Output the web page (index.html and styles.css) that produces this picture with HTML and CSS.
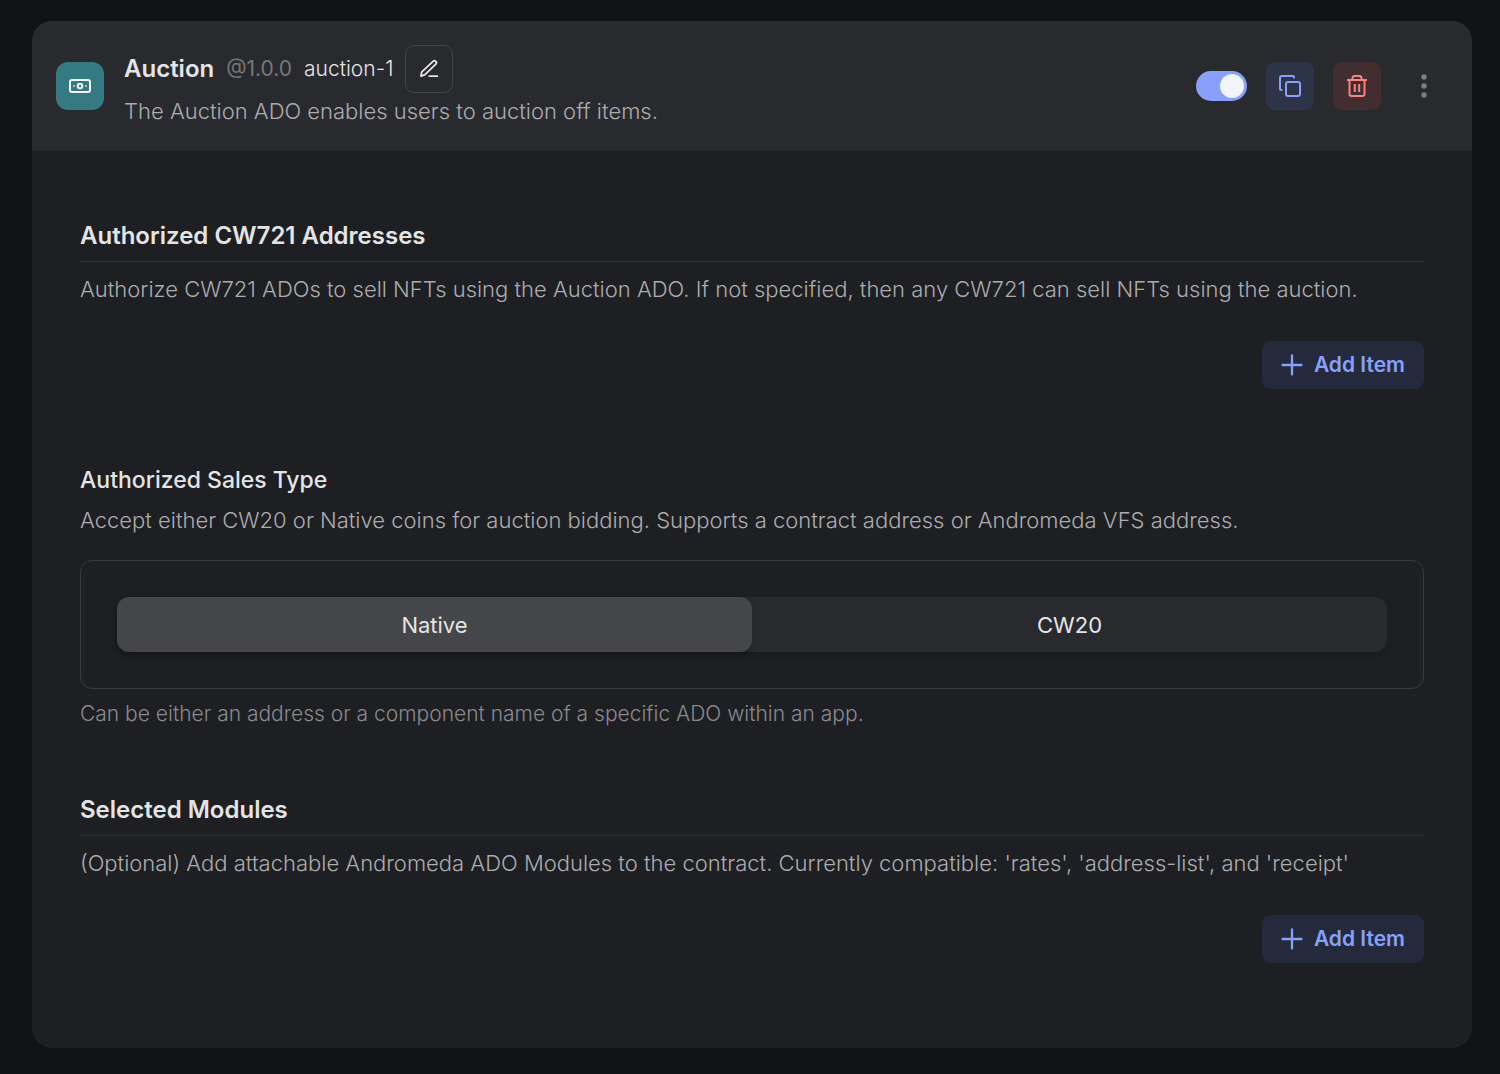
FILE: index.html
```html
<!DOCTYPE html>
<html lang="en">
<head>
<meta charset="utf-8">
<meta name="viewport" content="width=device-width, initial-scale=1">
<title>Auction</title>
<link rel="stylesheet" href="styles.css">
</head>
<body>
<main class="card">
  <header class="card-header">
    <div class="badge">
      <svg width="24" height="24" viewBox="0 0 24 24" fill="none" stroke="currentColor" stroke-width="2" aria-hidden="true"><rect x="2" y="6" width="20" height="12" rx="2"/><circle cx="12" cy="12" r="2.3"/><path d="M5.2 12h1.6M17.2 12h1.6" opacity=".7"/></svg>
    </div>
    <div class="summary">
      <div class="title-row">
        <h1 class="title">Auction</h1>
        <span class="version">@1.0.0</span>
        <span class="name">auction-1</span>
        <button class="icon-button edit" type="button" aria-label="Edit name">
          <svg width="20" height="20" viewBox="0 0 20 20" fill="none" stroke="currentColor" stroke-width="1.8" stroke-linecap="round" stroke-linejoin="round" aria-hidden="true"><path d="M10.300 17.200h8M2 17.200l.5-3.300c.1-.5.3-.9.6-1.200L14 2.300a1.900 1.900 0 0 1 2.800 2.800L6 15.600c-.3.3-.7.5-1.100.6z"/></svg>
        </button>
      </div>
      <p class="text">The Auction ADO enables users to auction off items.</p>
    </div>
    <div class="actions">
      <input class="switch" type="checkbox" role="switch" aria-label="Enabled" checked>
      <button class="icon-button copy" type="button" aria-label="Duplicate">
        <svg width="24" height="24" viewBox="0 0 24 24" fill="none" stroke="currentColor" stroke-width="2" stroke-linecap="round" stroke-linejoin="round" aria-hidden="true"><rect x="8" y="8" width="14" height="14" rx="2"/><path d="M3.500 16H3a1 1 0 0 1-1-1V4a2 2 0 0 1 2-2h11a1 1 0 0 1 1 1v.5"/></svg>
      </button>
      <button class="icon-button delete" type="button" aria-label="Delete">
        <svg width="24" height="24" viewBox="0 0 24 24" fill="none" stroke="currentColor" stroke-width="2" stroke-linejoin="round" aria-hidden="true"><path d="M2 6h20M4.500 6v14a2 2 0 0 0 2 2h11a2 2 0 0 0 2-2V6M7.500 6V4a2 2 0 0 1 2-2h5a2 2 0 0 1 2 2v2M9.800 10v8M14.200 10v8"/></svg>
      </button>
      <button class="icon-button more" type="button" aria-label="More options">
        <svg width="24" height="24" viewBox="0 0 24 24" fill="currentColor" aria-hidden="true"><circle cx="12" cy="3" r="2.700"/><circle cx="12" cy="12" r="2.700"/><circle cx="12" cy="21" r="2.700"/></svg>
      </button>
    </div>
  </header>
  <div class="card-body">
    <section class="section">
      <h2 class="heading ruled">Authorized CW721 Addresses</h2>
      <p class="text">Authorize CW721 ADOs to sell NFTs using the Auction ADO. If not specified, then any CW721 can sell NFTs using the auction.</p>
      <button class="add" type="button">
        <svg width="22" height="22" viewBox="0 0 22 22" fill="none" stroke="currentColor" stroke-width="2.300" stroke-linecap="round" aria-hidden="true"><path d="M11 1.500v19M1.500 11h19"/></svg>
        Add Item
      </button>
    </section>
    <fieldset class="section sales">
      <legend class="heading light">Authorized Sales Type</legend>
      <p class="text">Accept either CW20 or Native coins for auction bidding. Supports a contract address or Andromeda VFS address.</p>
      <div class="panel">
        <div class="segments">
          <label class="segment"><input class="segment-input" type="radio" name="sales-type" checked>Native</label>
          <label class="segment"><input class="segment-input" type="radio" name="sales-type">CW20</label>
        </div>
      </div>
      <p class="hint">Can be either an address or a component name of a specific ADO within an app.</p>
    </fieldset>
    <section class="section">
      <h2 class="heading ruled">Selected Modules</h2>
      <p class="text">(Optional) Add attachable Andromeda ADO Modules to the contract. Currently compatible: 'rates', 'address-list', and 'receipt'</p>
      <button class="add" type="button">
        <svg width="22" height="22" viewBox="0 0 22 22" fill="none" stroke="currentColor" stroke-width="2.300" stroke-linecap="round" aria-hidden="true"><path d="M11 1.500v19M1.500 11h19"/></svg>
        Add Item
      </button>
    </section>
  </div>
</main>
</body>
</html>
```
FILE: styles.css
```css
* { box-sizing: border-box; }
body {
  margin: 0;
  padding: 21px 28px 26px 32px;
  background: #111216;
  color: #e4e4e5;
  font-family: Inter, "Liberation Sans", sans-serif;
  font-size: 21px;
  line-height: 32px;
}
h1, h2, p { margin: 0; }
button { font: inherit; border: 0; padding: 0; cursor: pointer; }
svg { display: block; flex: none; }

.card { border-radius: 20px; background: #1e1f23; overflow: hidden; }
.card-header {
  display: flex;
  align-items: center;
  gap: 20px;
  padding: 24px;
  background: #292a2e;
}
.badge {
  display: grid;
  place-items: center;
  flex: none;
  width: 48px;
  height: 48px;
  border-radius: 12px;
  background: #347983;
  color: #f0f7f8;
}
.summary { flex: 1; min-width: 0; }
.title-row { display: flex; align-items: center; gap: 12px; margin-bottom: 2px; }
.title { font-size: 24px; font-weight: 600; }
.version { color: #76777a; }
.name { font-weight: 300; }
.text { color: #acacae; font-size: 22px; font-weight: 300; }

.icon-button {
  display: grid;
  place-items: center;
  flex: none;
  width: 48px;
  height: 48px;
  border-radius: 9px;
}
.edit { border: 1px solid #434447; background: transparent; color: #e4e4e5; }
.actions { display: flex; align-items: center; gap: 19px; }
.copy { background: #2e3447; color: #88a0fa; }
.delete { background: #422d31; color: #f88485; }
.more { background: transparent; color: #7d7d7f; }
.switch {
  appearance: none;
  display: flex;
  width: 51px;
  height: 30px;
  margin: 0;
  padding: 3px;
  border-radius: 15px;
  background: #45464a;
  cursor: pointer;
}
.switch::before { content: ""; width: 24px; height: 24px; border-radius: 50%; background: #f3f5fe; }
.switch:checked { justify-content: flex-end; background: #88a0fa; }

.card-body {
  display: flex;
  flex-direction: column;
  gap: 64px;
  padding: 69px 48px 85px;
}
.section { display: flex; flex-direction: column; min-width: 0; }
.heading { padding: 0; font-size: 24px; font-weight: 600; }
.ruled { padding-bottom: 9px; margin-bottom: 11px; border-bottom: 1px solid #303135; }
.light { font-size: 23px; font-weight: 500; margin-bottom: 8px; }
.add {
  display: flex;
  align-items: center;
  align-self: flex-end;
  gap: 11px;
  height: 48px;
  margin-top: 36px;
  padding: 0 19px;
  border-radius: 9px;
  background: #242a3c;
  color: #88a0fa;
  font-weight: 600;
}
.sales { margin: 11px 0 0; padding: 0; border: 0; }
.panel {
  margin-top: 24px;
  padding: 36px;
  border: 1px solid #393a3e;
  border-radius: 12px;
}
.segments { display: grid; grid-template-columns: 1fr 1fr; border-radius: 12px; background: #292a2e; box-shadow: 0 3px 6px #0002; }
.segment {
  position: relative;
  display: grid;
  place-items: center;
  height: 55px;
  border-radius: 12px;
  font-size: 22px;
  cursor: pointer;
}
.segment:has(:checked) { background: #454649; box-shadow: 0 3px 6px #0003; }
.segment-input { position: absolute; inset: 0; margin: 0; opacity: 0; cursor: pointer; }
.hint { margin-top: 9px; color: #8a8a8d; font-weight: 300; }
```
